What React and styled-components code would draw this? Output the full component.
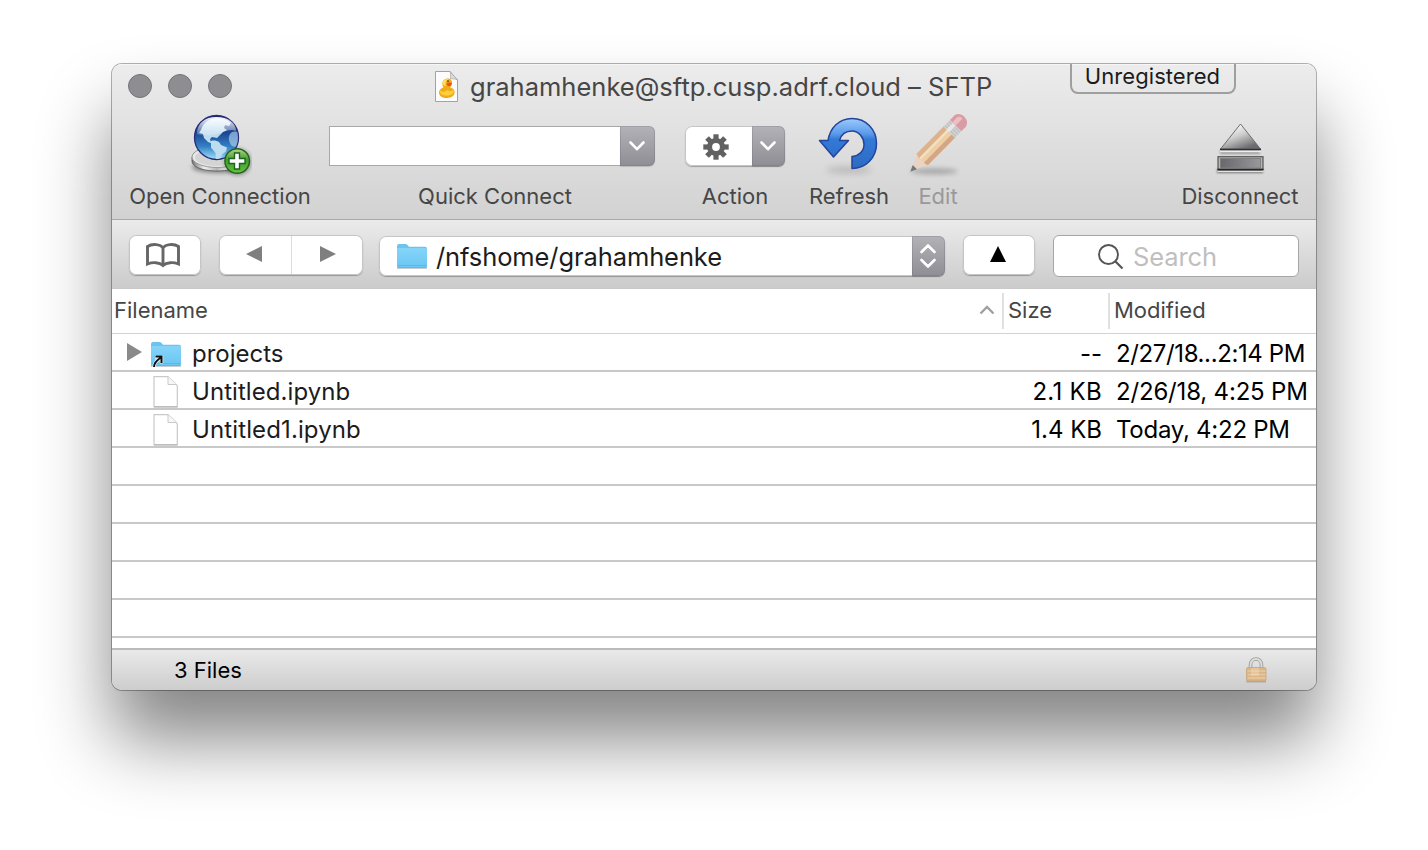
import React from 'react';
import styled, { createGlobalStyle } from 'styled-components';

const Global = createGlobalStyle`
  body { margin: 0; background: #fff; overflow: hidden; }
  * { box-sizing: border-box; }
`;

const Desktop = styled.main`
  width: 1428px;
  height: 850px;
  padding: 64px 112px 160px;
  overflow: hidden;
  font-family: Inter, "Liberation Sans", sans-serif;
  color: #000;
`;

const Window = styled.div`
  display: flex;
  flex-direction: column;
  width: 1204px;
  height: 626px;
  border-radius: 10px;
  background: #fff;
  box-shadow: 0 0 0 1px rgba(0, 0, 0, 0.3), 0 50px 72px rgba(0, 0, 0, 0.48);
`;

const Text = styled.span`
  font-size: ${(p) => p.$size || 22}px;
  font-weight: 430;
  letter-spacing: ${(p) => p.$track || 0}px;
  color: ${(p) => p.$color || '#464646'};
  line-height: 28px;
  white-space: pre;
`;

const Toolbar = styled.header`
  position: relative;
  height: 156px;
  border-radius: 10px 10px 0 0;
  border-bottom: 1px solid #a9a9a9;
  background: linear-gradient(#ececec, #d2d2d2);
  box-shadow: inset 0 2px 0 -1px #f6f6f6;
`;

const TitleRow = styled.div`
  display: flex;
  align-items: center;
  height: 44px;
  padding-left: 16px;
`;

const Lights = styled.div`
  display: flex;
  gap: 16px;
  width: 307px;
`;

const Light = styled.i`
  width: 24px;
  height: 24px;
  border-radius: 50%;
  border: 1px solid #747478;
  background: #8e8d92;
`;

const Title = styled.div`
  display: flex;
  align-items: center;
  gap: 11px;
  padding-top: 2px;
`;

const Badge = styled.div`
  position: absolute;
  left: 958px;
  top: 0;
  width: 166px;
  height: 30px;
  border: 2px solid #9f9f9f;
  border-top: 0;
  border-radius: 0 0 8px 8px;
  display: flex;
  justify-content: center;
  align-items: center;
  padding: 0 1px 5px 0;
`;

const Tools = styled.div`
  display: flex;
  padding: 0 17px;
`;

const Tool = styled.div`
  width: ${(p) => p.$w}px;
  margin-left: ${(p) => (p.$gap === undefined ? 'auto' : `${p.$gap}px`)};
  display: flex;
  flex-direction: column;
  align-items: center;
`;

const ToolArt = styled.div`
  height: 74px;
  width: 100%;
  display: flex;
  justify-content: center;
  padding-top: ${(p) => p.$top || 4}px;
`;

const Combo = styled.div`
  display: flex;
  width: 326px;
  height: 40px;
  margin-right: 6px;
`;

const ComboField = styled.div`
  flex: 1;
  border: 1px solid #a8a8a8;
  border-right: 0;
  background: #fff;
`;

const Cap = styled.div`
  width: ${(p) => p.$w}px;
  height: 100%;
  display: flex;
  align-items: center;
  justify-content: center;
  padding: 0 1px 0 0;
  border-radius: 0 6px 6px 0;
  background: linear-gradient(#b3b2b7, #8f8e94);
  box-shadow: inset 0 0 0 1px rgba(80, 80, 90, 0.18), 0 1px 1px rgba(0, 0, 0, 0.15);
`;

const Button = styled.div`
  display: flex;
  align-items: center;
  width: ${(p) => p.$w}px;
  height: 40px;
  margin-left: ${(p) => p.$gap || 0}px;
  border-radius: 7px;
  background: #fff;
  box-shadow: inset 0 0 0 1px #c5c5c5, 0 1px 1px rgba(0, 0, 0, 0.28);
`;

const Cell = styled.div`
  flex: 1;
  height: 38px;
  display: flex;
  align-items: center;
  justify-content: center;
  padding: ${(p) => p.$top || 0}px ${(p) => p.$right || 0}px ${(p) => p.$bottom || 0}px ${(p) => p.$left || 0}px;
  & + & { border-left: 1px solid #dcdcdc; }
`;

const NavBar = styled.nav`
  display: flex;
  align-items: flex-start;
  height: 69px;
  padding: 15px 17px 0;
  border-bottom: 1px solid #c9c9c9;
  background: linear-gradient(#ebebeb, #cbcbcb);
`;

const PathBox = styled(Button)`
  margin-top: 1px;
  padding-left: 17px;
  gap: 8px;
  & > span { flex: 1; padding-top: 1px; }
`;

const Search = styled.div`
  display: flex;
  align-items: center;
  gap: 9px;
  width: 246px;
  height: 42px;
  margin-left: 18px;
  padding: 2px 0 0 44px;
  border: 1px solid #a6a6a6;
  border-radius: 6px;
  background: #fff;
`;

const Row = styled.div`
  display: grid;
  grid-template-columns: 890px 106px 208px;
  align-items: center;
  height: 38px;
  flex: none;
  border-bottom: 2px solid #c8c8c8;
`;

const HeaderRow = styled(Row)`
  height: 45px;
  border-bottom: 1px solid #d3d3d3;
`;

const HeaderCell = styled.div`
  display: flex;
  align-items: center;
  justify-content: space-between;
  height: 36px;
  margin-bottom: 1px;
  padding: 0 6px 1px ${(p) => (p.$first ? 2 : 4)}px;
  ${(p) => !p.$first && 'border-left: 2px solid #e0e0e0;'}
`;

const Rows = styled.section`
  flex: 1;
  overflow: hidden;
  display: flex;
  flex-direction: column;
`;

const NameCell = styled.div`
  display: flex;
  align-items: center;
  height: 36px;
`;

const Twisty = styled.div`
  width: 38px;
  height: 36px;
  padding: 9px 0 0 15px;
`;

const FileArt = styled.div`
  width: 42px;
  height: 36px;
  padding: ${(p) => (p.$folder ? '7px 0 0 0' : '4px 0 0 3px')};
`;

const NameText = styled(Text)`
  padding-top: 4px;
`;

const SizeCell = styled.div`
  text-align: right;
  padding: 4px 6px 0 0;
`;

const DateCell = styled.div`
  padding: 4px 0 0 8px;
`;

const Status = styled.footer`
  display: flex;
  align-items: center;
  justify-content: space-between;
  height: 42px;
  padding: 0 49px 0 62px;
  border-top: 2px solid #bababa;
  border-radius: 0 0 10px 10px;
  background: linear-gradient(#e9e9e9, #cdcdcd);
`;

const Chevron = () => (
  <svg width="18" height="12" viewBox="0 0 18 12">
    <path d="M2.500 2.500 9 9.200 15.500 2.500" fill="none" stroke="#fff" strokeWidth="2.600" strokeLinecap="round" strokeLinejoin="round" />
  </svg>
);

const DuckDoc = () => (
  <svg width="24" height="32" viewBox="0 0 24 32">
    <path d="M.5.5H15L22.500 9V30.500H.5z" fill="#fcfcfc" stroke="#a2a2a2" />
    <path d="M15 .5C16 4 16 6.500 15 8c3-.6 5.500 0 7.500 1z" fill="#ddd" stroke="#aaa" strokeWidth=".8" />
    <path d="M8.500 16.500C6.500 13 7 8 12 7.500c3.500-.2 5.500 2.200 5 5-.2 2-1.500 3-2 4 2.500.3 4 1.700 4.500 3.500C20.500 24 17 27 12 27S4 25 4 21.500c0-2 1.500-4.500 4.500-5z" fill="#f0ac17" />
    <path d="M8 11c.5-2.500 3-3.500 5.500-2.800C11 9 10 12 11 15c-2 0-3.500-1.500-3-4z" fill="#ffdf58" />
    <path d="M5 19.500c2 2 5.500 1.500 7-.5 2 1.500 4.500 1.500 6.500 0 .8 3-2 5.500-6.500 5.500S4.500 23 5 19.500z" fill="#ffcf3e" />
    <path d="M11.500 12.500c2-1.500 4-1 5.500-.5-.3 2.200-1.500 3.500-3.300 3.200-1.200-.4-2.500-1.200-2.200-2.700z" fill="#ea541b" />
    <circle cx="13" cy="10.200" r=".9" fill="#60430b" />
  </svg>
);

const Globe = () => (
  <svg width="64" height="66" viewBox="0 0 64 66">
    <defs>
      <linearGradient id="sea" x1="0" y1="0" x2="0" y2="1">
        <stop offset="0" stopColor="#222f7c" /><stop offset=".4" stopColor="#1b4994" />
        <stop offset=".7" stopColor="#347fc4" /><stop offset="1" stopColor="#9ee4fb" />
      </linearGradient>
      <linearGradient id="gloss" x1="0" y1="0" x2="0" y2="1">
        <stop offset="0" stopColor="#fff" stopOpacity=".95" /><stop offset="1" stopColor="#fff" stopOpacity=".18" />
      </linearGradient>
      <linearGradient id="metal" x1="0" y1="0" x2="1" y2="0">
        <stop offset="0" stopColor="#777" /><stop offset=".25" stopColor="#f0f0f0" />
        <stop offset=".5" stopColor="#b4b4b4" /><stop offset=".7" stopColor="#eee" /><stop offset="1" stopColor="#777" />
      </linearGradient>
      <linearGradient id="green" x1="0" y1="0" x2="0" y2="1">
        <stop offset="0" stopColor="#b4d58b" /><stop offset=".45" stopColor="#419b2d" /><stop offset="1" stopColor="#63c43a" />
      </linearGradient>
      <filter id="soft" x="-30%" y="-50%" width="160%" height="200%"><feGaussianBlur stdDeviation="2" /></filter>
      <clipPath id="ball"><circle cx="28.500" cy="25.500" r="21.500" /></clipPath>
    </defs>
    <ellipse cx="31" cy="55" rx="27" ry="6" fill="#000" opacity=".4" filter="url(#soft)" />
    <path d="M4 45v4c0 6 11 10 25 10s25-4 25-10v-4z" fill="url(#metal)" stroke="#555" strokeWidth=".8" />
    <ellipse cx="29" cy="45" rx="25" ry="10.500" fill="#e8e8e8" stroke="#999" />
    <ellipse cx="29" cy="45.500" rx="22" ry="8.500" fill="#d4d4d4" />
    <circle cx="28.500" cy="25.500" r="22" fill="url(#sea)" stroke="#262a77" strokeWidth="1.300" />
    <g clipPath="url(#ball)" fill="#bcdcf0">
      <path d="M13 18c2-6 6-11 15-12 7-.5 12 2 15 5l-2 3-4-1-1 3 3 2-4 2-3 3-3 3-5-1-2 2 1 3 3 0 3 2-4 0-5-2-4-4-1-4-4-1z" />
      <path d="M23 29c3-1 6 0 8 1l2 3 6 2.500-1 4-4 3-2 4-3 1.500-1-1-.500-6-4.500-5.500z" />
      <path d="M42 22c2-3 5-3 8-2v14c-4 2-7 0-8-3s-2-5 0-9z" opacity=".6" />
    </g>
    <path d="M9 22C9 11 17 5 28.500 5S48 11 48 19c-6-3-12 1-19 3s-14 2-20 0z" fill="url(#gloss)" />
    <circle cx="50" cy="50" r="13.500" fill="#000" opacity=".3" filter="url(#soft)" />
    <circle cx="49.200" cy="49" r="12.300" fill="url(#green)" stroke="#22621e" strokeWidth="1.400" />
    <path d="M46.500 41h5v5.500h5.500v5H51.500V57h-5v-5.500H41v-5h5.500z" fill="#fff" stroke="#1d6420" strokeWidth="1.400" />
  </svg>
);

const Gear = () => (
  <svg width="26" height="26" viewBox="-13 -13 26 26">
    <g fill="#616161">
      {[0, 45, 90, 135].map((a) => (
        <rect key={a} x="-2.600" y="-12.700" width="5.200" height="25.400" transform={`rotate(${a})`} />
      ))}
      <circle r="9" />
    </g>
    <circle r="3.900" fill="#fff" />
  </svg>
);

const RefreshArt = () => (
  <svg width="62" height="64" viewBox="0 0 62 64">
    <defs>
      <linearGradient id="blue" x1="0" y1="0" x2="0" y2="1">
        <stop offset="0" stopColor="#9ccafa" /><stop offset=".3" stopColor="#5b9beb" />
        <stop offset=".42" stopColor="#3279d6" /><stop offset="1" stopColor="#2c6bc2" />
      </linearGradient>
      <filter id="fuzz" x="-30%" y="-100%" width="160%" height="300%"><feGaussianBlur stdDeviation="3" /></filter>
    </defs>
    <ellipse cx="31" cy="56" rx="23" ry="4" fill="#000" opacity=".13" filter="url(#fuzz)" />
    <path d="M34 54.500V42.500C41 42 46 37 46 30.500S41 17 34 17c-6.500 0-11 4-12.500 9.500H30.500L15.500 43 1.500 26.500h8.500C12 14 21 4.500 34 4.500c14 0 24.500 11 24.500 25s-10.500 25-24.500 25z" fill="url(#blue)" stroke="#24439a" strokeWidth="1.500" strokeLinejoin="round" />
  </svg>
);

const PencilArt = () => (
  <svg width="66" height="66" viewBox="0 0 66 66">
    <defs><filter id="pshadow" x="-30%" y="-100%" width="160%" height="300%"><feGaussianBlur stdDeviation="3" /></filter></defs>
    <ellipse cx="29" cy="61" rx="25" ry="3" fill="#000" opacity=".25" filter="url(#pshadow)" />
    <g transform="translate(3.500 61.500) rotate(-45.500)">
      <path d="M0 0 18-7.500V7.500z" fill="#e9d3c4" />
      <path d="M0 0 7-3.200V3.200z" fill="#77777a" />
      <path d="M18-8.500H60V8.500H18l-2-3 2-3.500-2-3.500z" fill="#edcfa6" />
      <path d="M18-8.500H60v5H17z" fill="#dcb38e" />
      <path d="M17 3.500H60v5H18z" fill="#d4a685" />
      <path d="M18-3.500H60v2.500H17z" fill="#f4dfc0" />
      <path d="M59-8.500H69V8.500H59z" fill="#d0d0d0" />
      <path d="M61-8.500V8.500M64-8.500V8.500M67-8.500V8.500" stroke="#b8b8b8" strokeWidth="1" />
      <path d="M59-4H69v4H59z" fill="#f2f2f2" opacity=".75" />
      <path d="M69-8.500H76c4 1 6 4 6 8.500s-2 7.500-6 8.500H69z" fill="#d99ca5" />
      <path d="M69-5H77c2 1 3 3 2 5H69z" fill="#ebc0c5" />
    </g>
  </svg>
);

const EjectArt = () => (
  <svg width="50" height="56" viewBox="0 0 50 56">
    <defs>
      <linearGradient id="tri" x1="0" y1="0" x2=".6" y2="1">
        <stop offset=".15" stopColor="#fff" /><stop offset=".55" stopColor="#ccc" /><stop offset="1" stopColor="#6b6b70" />
      </linearGradient>
      <linearGradient id="slab" x1="0" y1="0" x2="1" y2="0">
        <stop offset="0" stopColor="#68686c" /><stop offset="1" stopColor="#99999d" />
      </linearGradient>
      <filter id="eb" x="-20%" y="-80%" width="140%" height="260%"><feGaussianBlur stdDeviation="1.200" /></filter>
    </defs>
    <rect x="2" y="47" width="46" height="4" fill="#000" opacity=".45" filter="url(#eb)" />
    <rect x="5" y="28" width="40" height="4" fill="#000" opacity=".3" filter="url(#eb)" />
    <path d="M25.500 2 45.500 27H5.500z" fill="url(#tri)" stroke="#6c6c70" />
    <path d="M5 27.500h41" stroke="#303034" strokeWidth="1.600" />
    <path d="M5 29.500h41" stroke="#eee" strokeWidth="1.500" />
    <rect x="3" y="34.700" width="45" height="12.600" fill="#b5b5b5" stroke="#555" strokeWidth="1.200" />
    <rect x="5.500" y="36.500" width="40" height="9.500" fill="url(#slab)" stroke="#808080" />
    <path d="M2.500 47.500h46" stroke="#27272a" strokeWidth="1.600" />
    <path d="M2.500 49.500h46" stroke="#e5e5e5" strokeWidth="1.200" />
  </svg>
);

const Book = () => (
  <svg width="36" height="26" viewBox="0 0 36 26">
    <path d="M18 5C15.500 1 7 .5 2.500 3.500v17.500c5-2 12-2 15.500 1.500 3.500-3.500 10.500-3.500 15.500-1.500V3.500C29 .5 20.500 1 18 5zM18 5v18" fill="none" stroke="#666" strokeWidth="2.900" strokeLinejoin="miter" />
  </svg>
);

const Folder = ({ link }) => (
  <svg width="32" height="27" viewBox="0 0 32 27">
    <defs>
      <linearGradient id="fold" x1="0" y1="0" x2="0" y2="1"><stop offset="0" stopColor="#85d4f8" /><stop offset="1" stopColor="#69c6f3" /></linearGradient>
    </defs>
    <path d="M1 25.500h30" stroke="#000" strokeOpacity=".18" />
    <path d="M1 3q0-2 2-2h7q1 0 2 1.500l1 1.300H29q2 0 2 2V10H1z" fill="#6cc3ec" />
    <rect x="1" y="5" width="30" height="20" rx="1.200" fill="url(#fold)" />
    <path d="M1.500 22.500h29M1.500 24.600h29" stroke="#54b0df" strokeWidth=".7" />
    {link && (
      <g fill="none">
        <path d="M4 26C4 22 7 19 11 16.500M5 16h6.500v6.500" stroke="#fff" strokeWidth="3.500" opacity=".75" />
        <path d="M4 26C4 22 7 19 11 16.500M5.500 15.500h6v6.500" stroke="#111" strokeWidth="2" />
      </g>
    )}
  </svg>
);

const FileIcon = () => (
  <svg width="26" height="32" viewBox="0 0 26 32">
    <path d="M1 .700H15C18 3.500 22 6.500 24.300 10V30.700H1z" fill="#fff" stroke="#c9c9c9" strokeWidth="1.200" />
    <path d="M15 .700V8.500h8.500" fill="#f7f7f7" stroke="#c9c9c9" />
    <path d="M1 31h23.500" stroke="#b0b0b0" />
  </svg>
);

const Lock = () => (
  <svg width="22" height="26" viewBox="0 1 22 26">
    <path d="M5.500 12V9a5.500 6 0 0 1 11 0V12" fill="none" stroke="#999" strokeWidth="3.600" />
    <path d="M5.500 12V9a5.500 6 0 0 1 11 0V12" fill="none" stroke="#dedede" strokeWidth="1.900" />
    <rect x="1.500" y="24" width="19.500" height="2.500" fill="#000" opacity=".2" />
    <rect x="1.500" y="11.500" width="19.500" height="13.500" rx="1.500" fill="#dcb587" stroke="#c9a478" strokeWidth=".8" />
    <path d="M2.500 15h18M2.500 18.500h18M2.500 22h18" stroke="#e6c9a2" strokeWidth="1.300" />
    <rect x="6" y="12" width="8" height="8" fill="#f6dfbd" opacity=".4" />
  </svg>
);

const Tri = ({ dir, color = '#7f7f7f' }) => (
  <svg width="18" height="18" viewBox="0 0 18 18">
    <path d={{ left: 'M1 9 17 1V17z', right: 'M17 9 1 1V17z', up: 'M9 1 17 17H1z' }[dir]} fill={color} />
  </svg>
);

const files = [
  { name: 'projects', size: '--', date: '2/27/18...2:14 PM', dateTrack: -0.38, folder: true },
  { name: 'Untitled.ipynb', nameTrack: 0.06, size: '2.1 KB', sizeTrack: 0.3, date: '2/26/18, 4:25 PM', dateTrack: -0.18 },
  { name: 'Untitled1.ipynb', nameTrack: 0.12, size: '1.4 KB', date: 'Today, 4:22 PM', dateTrack: -0.26 },
  {}, {}, {}, {}, {},
];

export default function App() {
  return (
    <>
      <Global />
      <Desktop>
        <Window>
          <Toolbar>
            <TitleRow>
              <Lights><Light /><Light /><Light /></Lights>
              <Title><DuckDoc /><Text $size={25.5} $track={0.01}>grahamhenke@sftp.cusp.adrf.cloud – SFTP</Text></Title>
            </TitleRow>
            <Badge><Text $color="#1c1c1c" $track={0.06}>Unregistered</Text></Badge>
            <Tools>
              <Tool $w={182} $gap={0}><ToolArt><Globe /></ToolArt><Text>Open Connection</Text></Tool>
              <Tool $w={332} $gap={18}>
                <ToolArt $top={18}><Combo><ComboField /><Cap $w={35}><Chevron /></Cap></Combo></ToolArt>
                <Text>Quick Connect</Text>
              </Tool>
              <Tool $w={100} $gap={24}>
                <ToolArt $top={18}><Button $w={100}><Cell $right={5} $top={2}><Gear /></Cell><Cap $w={33}><Chevron /></Cap></Button></ToolArt>
                <Text>Action</Text>
              </Tool>
              <Tool $w={80} $gap={24}><ToolArt $top={6}><RefreshArt /></ToolArt><Text>Refresh</Text></Tool>
              <Tool $w={62} $gap={18}><ToolArt><PencilArt /></ToolArt><Text $color="#999">Edit</Text></Tool>
              <Tool $w={118}><ToolArt $top={14}><EjectArt /></ToolArt><Text>Disconnect</Text></Tool>
            </Tools>
          </Toolbar>
          <NavBar>
            <Button $w={72}><Cell $right={4} $top={1}><Book /></Cell></Button>
            <Button $w={144} $gap={18}><Cell $right={2} $bottom={2}><Tri dir="left" /></Cell><Cell $left={2} $bottom={2}><Tri dir="right" /></Cell></Button>
            <PathBox $w={566} $gap={16}><Folder /><Text $size={25.5} $track={-0.1} $color="#1c1c1c">/nfshome/grahamhenke</Text>
              <Cap $w={33}>
                <svg width="20" height="28" viewBox="0 0 20 28"><path d="M3.500 10l6.500-6.500 6.500 6.500M3.500 18l6.500 6.500 6.500-6.500" fill="none" stroke="#fff" strokeWidth="2.600" strokeLinecap="round" strokeLinejoin="round" /></svg>
              </Cap>
            </PathBox>
            <Button $w={72} $gap={18}><Cell $right={2} $bottom={2}><Tri dir="up" color="#000" /></Cell></Button>
            <Search>
              <svg width="26" height="26" viewBox="0 0 26 26"><circle cx="10.500" cy="10.500" r="9.500" fill="none" stroke="#555" strokeWidth="1.900" /><path d="M17.500 17.500 24.500 24.500" stroke="#555" strokeWidth="2.200" /></svg>
              <Text $size={25.5} $track={-0.1} $color="#bfbfbf">Search</Text>
            </Search>
          </NavBar>
          <HeaderRow>
            <HeaderCell $first><Text>Filename</Text>
              <svg width="18" height="12" viewBox="0 0 18 12"><path d="M2.500 9.500 9 3l6.500 6.500" fill="none" stroke="#a0a0a0" strokeWidth="2.400" /></svg>
            </HeaderCell>
            <HeaderCell><Text>Size</Text></HeaderCell>
            <HeaderCell><Text>Modified</Text></HeaderCell>
          </HeaderRow>
          <Rows>
            {files.map((f, i) => (
              <Row key={i}>
                {f.name && (
                  <>
                    <NameCell>
                      <Twisty>{f.folder && <svg width="16" height="18" viewBox="0 0 16 18"><path d="M0 0 15 9 0 18z" fill="#8a8a8a" /></svg>}</Twisty>
                      <FileArt $folder={f.folder}>{f.folder ? <Folder link /> : <FileIcon />}</FileArt>
                      <NameText $size={24} $track={f.nameTrack} $color="#1c1c1c">{f.name}</NameText>
                    </NameCell>
                    <SizeCell><Text $size={24} $track={f.sizeTrack} $color="#000">{f.size}</Text></SizeCell>
                    <DateCell><Text $size={24} $track={f.dateTrack} $color="#000">{f.date}</Text></DateCell>
                  </>
                )}
              </Row>
            ))}
          </Rows>
          <Status><Text $color="#000">3 Files</Text><Lock /></Status>
        </Window>
      </Desktop>
    </>
  );
}
